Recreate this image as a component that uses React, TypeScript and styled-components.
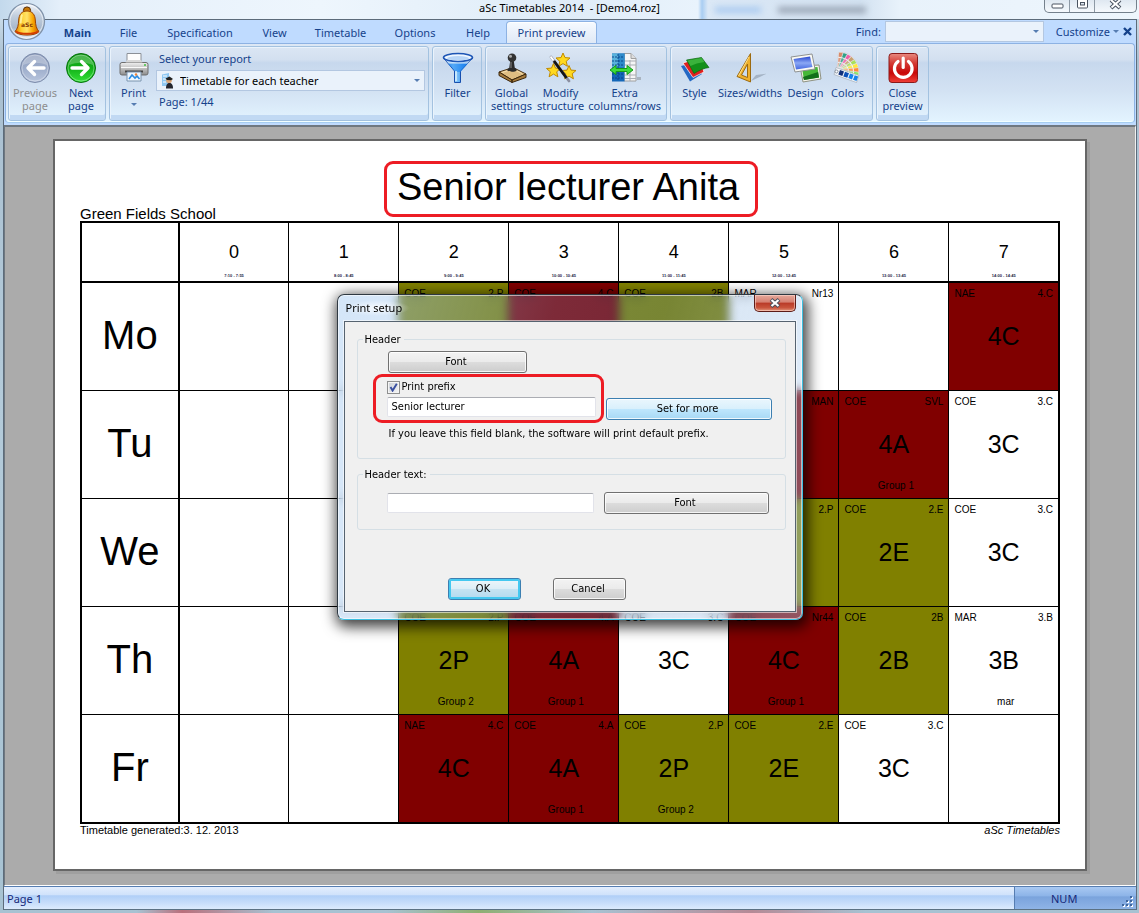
import React from "react";
import styled, { createGlobalStyle, css } from "styled-components";

const uiFont = `"Noto Sans", "Open Sans", sans-serif`;
const dialogFont = `"DejaVu Sans Condensed", "DejaVu Sans", sans-serif`;
const printFont = `"Liberation Sans", Arial, sans-serif`;
const navy = "#15428b";
const markRed = "#ed1c24";

const GlobalStyle = createGlobalStyle`
  *, *::before, *::after { box-sizing: border-box; }
  body { margin: 0; font-family: ${uiFont}; font-size: 11px; line-height: 13px; color: #000; }
  button, input, select { font: inherit; color: inherit; margin: 0; }
  svg { display: block; flex: none; }
`;

/* ---------- window ---------- */

const Desktop = styled.div`
  position: relative;
  min-height: 100vh;
  display: flex;
  flex-direction: column;
  padding: 0 2px 3px 3px;
  background:
    linear-gradient(90deg, transparent 12%, #b9707c 16%, transparent 24%, transparent 34%, #8fae72 42%, transparent 52%, #b58a96 66%, transparent 76%) bottom / 100% 3px no-repeat,
    linear-gradient(180deg, #d7e6f3 0, #a9bfd0 60px, #b4cbda 400px, #a7c2d2 100%);
`;

const TitleBar = styled.header`
  position: relative;
  height: 19px;
  margin: 0 -2px 0 -3px;
  display: flex;
  justify-content: center;
  background: linear-gradient(90deg, #c3d9ec 0, #e4effa 60px, #eef6fd 320px, #dfecf8 560px, #e9f3fc 698px, #a9cdf2 702px, #dbe8f6 708px, #d3e2f1 860px, #e8f2fb 900px, #eef6fd 100%);
`;

const WindowTitle = styled.h1`
  margin: 0;
  padding-top: 1px;
  font-size: 11px;
  font-weight: 400;
  line-height: 14px;
  white-space: pre;
`;

const GhostText = styled.span<{ $x: number; $w: number; $c: string }>`
  position: absolute;
  top: 7px;
  left: ${(p) => p.$x}px;
  width: ${(p) => p.$w}px;
  height: 6px;
  background: ${(p) => p.$c};
  filter: blur(3px);
`;

const WindowControls = styled.div`
  position: absolute;
  top: 0;
  right: 2px;
  height: 13px;
  display: flex;
  border: 1px solid #74808c;
  border-top: 0;
  border-radius: 0 0 5px 5px;
  overflow: hidden;
  background: linear-gradient(#dfe8f1, #f5f9fd);
`;

const WindowButton = styled.button<{ $w: number }>`
  width: ${(p) => p.$w}px;
  padding: 0;
  border: 0;
  border-right: 1px solid #8d99a5;
  background: transparent;
  display: flex;
  justify-content: center;
  align-items: flex-start;
  &:last-child { border-right: 0; }
`;

const Frame = styled.div`
  flex: 1;
  display: flex;
  flex-direction: column;
  border: 1px solid #5c6b7a;
  border-bottom-color: #5b7183;
  background: #bfdbff;
`;

const Orb = styled.button`
  position: absolute;
  left: 7px;
  top: 2px;
  width: 39px;
  height: 39px;
  padding: 0;
  border: 0;
  background: transparent;
`;

/* ---------- ribbon ---------- */

const TabBar = styled.nav`
  height: 23px;
  padding: 0 4px 0 46px;
  display: flex;
  align-items: flex-end;
  color: ${navy};
`;

const Tab = styled.button<{ $active?: boolean; $bold?: boolean; $w: number }>`
  width: ${(p) => p.$w}px;
  height: 22px;
  padding: 0;
  border: 1px solid transparent;
  border-bottom: 0;
  border-radius: 4px 4px 0 0;
  background: transparent;
  font-weight: ${(p) => (p.$bold ? 700 : 400)};
  white-space: nowrap;
  ${(p) =>
    p.$active &&
    css`
      position: relative;
      border-color: #8db2e3;
      background: linear-gradient(#f6faff, #dfe9f6);
      box-shadow: inset 0 1px 0 #fff;
    `}
`;

const FindArea = styled.div`
  margin-left: auto;
  align-self: stretch;
  display: flex;
  align-items: center;
  gap: 4px;
`;

const SelectBox = styled.div`
  height: 21px;
  display: flex;
  align-items: center;
  padding-right: 4px;
  border: 1px solid #b3c7e1;
  background: #eaf2fb;
  color: #000;
  select {
    flex: 1;
    min-width: 0;
    height: 19px;
    padding: 0 0 0 4px;
    border: 0;
    outline: 0;
    background: transparent;
    appearance: none;
  }
`;

const FindBox = styled(SelectBox)`
  width: 159px;
`;

const LinkButton = styled.button`
  margin-left: 8px;
  padding: 0;
  border: 0;
  background: transparent;
  display: flex;
  align-items: center;
  gap: 3px;
`;

const CloseTab = styled(LinkButton)`
  margin-left: 0;
`;

const Caret = styled.i`
  width: 0;
  height: 0;
  border: 3px solid transparent;
  border-top-color: #567db1;
  border-bottom: 0;
`;

const RibbonPanel = styled.div`
  height: 80px;
  margin: 0 1px;
  padding: 2px;
  display: flex;
  gap: 3px;
  border: 1px solid #8db2e3;
  border-bottom-color: #a6cdf0;
  border-radius: 4px;
  box-shadow: inset 0 -1px 0 #f2ffff;
  background: linear-gradient(#dde8f5 0, #d3e0f0 20%, #c7d8ed 24%, #d3e2f3 60%, #e3f4ff 100%);
`;

const Group = styled.div<{ $w: number }>`
  flex: 0 1 ${(p) => p.$w}px;
  display: flex;
  height: 75px;
  border: 1px solid #a3c2e0;
  border-radius: 3px;
  box-shadow: inset 1px 1px 0 #eaf3fc, inset 0 -5px 0 #c1d9f3;
  color: ${navy};
`;

const ToolButton = styled.button<{ $w: number }>`
  flex: 0 0 ${(p) => p.$w}px;
  padding: 5px 0 0 1px;
  border: 0;
  background: transparent;
  display: flex;
  flex-direction: column;
  align-items: center;
  justify-content: flex-start;
  text-align: center;
  white-space: pre;
  line-height: 13px;
  &:disabled { color: #8d8d8d; }
  svg { margin-bottom: 2px; }
  i { margin-top: 4px; }
`;

const ReportPicker = styled.div`
  flex: 1;
  display: flex;
  flex-direction: column;
  padding: 4px 3px 0 0;
  line-height: 16px;
  label, span { padding-left: 3px; }
  > div { margin: 3px 0; padding-left: 3px; }
`;

/* ---------- workspace and printed page ---------- */

const Workspace = styled.main`
  flex: 1;
  margin-top: 2px;
  padding: 12px 48px 14px 48px;
  border: 2px solid #6f7880;
  border-width: 2px 1px 1px 1px;
  border-bottom-color: #fff;
  border-right-color: #f0f0f0;
  background: #ababab;
`;

const Paper = styled.article`
  padding: 20px 25px 33px;
  border: 2px solid #666;
  background: #fff;
  box-shadow: 3px 3px 0 #9f9f9f;
  font-family: ${printFont};
`;

const PaperHeader = styled.div`
  display: grid;
  grid-template-columns: 1fr auto 1fr;
  align-items: end;
  font-size: 15px;
  line-height: 15px;
`;

const PaperTitle = styled.h2`
  height: 56px;
  margin: 0 0 4px 2px;
  padding: 0 16px 4px 10px;
  display: flex;
  align-items: center;
  border: 3px solid ${markRed};
  border-radius: 9px;
  font-size: 38px;
  font-weight: 400;
  line-height: 44px;
  white-space: nowrap;
`;

const PaperFooter = styled.div`
  display: flex;
  justify-content: space-between;
  font-size: 11px;
  line-height: 12px;
`;

const Grid = styled.table`
  width: 100%;
  border-collapse: collapse;
  table-layout: fixed;
  border: 2px solid #000;
`;

const HeadCell = styled.th`
  height: 60px;
  padding: 0;
  border: 1px solid #000;
  border-bottom-width: 2px;
  font-size: 18px;
  font-weight: 400;
  line-height: 20px;
  vertical-align: bottom;
  &:first-child { width: 10%; border-right-width: 2px; }
  small {
    display: block;
    padding: 12px 0 3px;
    color: #224;
    font-size: 4px;
    font-weight: 700;
    line-height: 4px;
  }
`;

const DayCell = styled.th`
  height: 108px;
  padding: 0 0 2px;
  border: 1px solid #000;
  border-right-width: 2px;
  font-size: 40px;
  font-weight: 400;
`;

const tones = { w: "#fff", o: "#808000", m: "#800000" };
type Tone = keyof typeof tones;

const LessonCell = styled.td<{ $tone: Tone }>`
  height: 108px;
  padding: 0;
  border: 1px solid #000;
  background: ${(p) => tones[p.$tone]};
  font-size: 10px;
  line-height: 12px;
`;

const Lesson = styled.div`
  height: 107px;
  padding: 5px 5px 6px;
  display: flex;
  flex-direction: column;
  justify-content: space-between;
  text-align: center;
  > div { display: flex; justify-content: space-between; min-height: 12px; }
  > strong { font-size: 25px; font-weight: 400; line-height: 30px; }
  > span { min-height: 12px; padding-left: 4px; }
`;

/* ---------- status bar ---------- */

const StatusBar = styled.footer`
  height: 23px;
  display: flex;
  border-top: 1px solid #567db1;
  background: linear-gradient(#e3eefd 0, #d0e2fb 35%, #b0cff7 40%, #c9defa 75%, #dcebfd 100%);
  color: #15287a;
  line-height: 21px;
`;

const StatusText = styled.span`
  flex: 1;
  padding: 1px 0 0 3px;
`;

const StatusMode = styled.span`
  width: 122px;
  padding: 1px 0 0 36px;
  display: flex;
  justify-content: space-between;
  align-items: flex-end;
  border-left: 1px solid #567db1;
  background: linear-gradient(#a9c9f2 0, #8db4e8 40%, #7aa3dc 45%, #8fb4e6 100%);
`;

/* ---------- dialog ---------- */

const DialogLayer = styled.div`
  position: fixed;
  inset: 0;
  display: grid;
  place-items: center;
`;

const Dialog = styled.section`
  position: relative;
  width: 466px;
  padding: 0 6px 7px 6px;
  border: 1px solid #2f3942;
  border-right-color: #3dbfe0;
  border-bottom-color: #3dbfe0;
  border-radius: 7px;
  background: linear-gradient(105deg, rgba(170, 205, 242, 0.5), rgba(116, 168, 224, 0.25) 40%, rgba(96, 148, 204, 0.25) 60%, rgba(180, 212, 246, 0.4));
  backdrop-filter: blur(5px);
  box-shadow: inset 0 0 0 1px rgba(255, 255, 255, 0.55), 2px 4px 14px 3px rgba(0, 0, 0, 0.75);
  font-family: ${dialogFont};
  line-height: 14px;
`;

const DialogBar = styled.div`
  height: 26px;
  display: flex;
  justify-content: space-between;
  align-items: flex-start;
`;

const DialogTitle = styled.h3`
  margin: 5px 0 0;
  padding: 0 8px 0 2px;
  font-family: ${uiFont};
  font-size: 11px;
  font-weight: 400;
  line-height: 16px;
  background: radial-gradient(closest-side, rgba(255, 255, 255, 0.8), rgba(255, 255, 255, 0));
`;

const DialogClose = styled.button`
  width: 42px;
  height: 17px;
  padding: 0;
  display: flex;
  align-items: center;
  justify-content: center;
  border: 1px solid #5c1c18;
  border-top: 0;
  border-radius: 0 0 5px 5px;
  background: linear-gradient(#e6a99c 0, #d57f70 45%, #b93a27 50%, #c9553d 80%, #e39a80 100%);
  box-shadow: inset 0 0 0 1px rgba(255, 220, 210, 0.55);
`;

const DialogBody = styled.div`
  padding: 11px 9px 11px 12px;
  border: 1px solid #566370;
  box-shadow: 0 0 0 1px rgba(255, 255, 255, 0.55);
  background: #f0f0f0;
`;

const FieldGroup = styled.fieldset<{ $top: number; $bottom: number }>`
  min-width: 0;
  margin: 0 0 9px;
  padding: ${(p) => p.$top}px 12px ${(p) => p.$bottom}px 15px;
  border: 1px solid #d5dfe5;
  border-radius: 3px;
  legend { margin-left: -10px; padding: 0 3px 0 2px; }
  p { margin: 4px 0 0 16px; white-space: nowrap; }
`;

const Row = styled.div<{ $gap?: number; $indent?: number; $top?: number }>`
  display: flex;
  align-items: flex-start;
  gap: ${(p) => p.$gap ?? 0}px;
  margin: ${(p) => p.$top ?? 0}px 0 0 ${(p) => p.$indent ?? 0}px;
`;

const PushButton = styled.button<{ $w: number; $kind?: "hot" | "default" }>`
  width: ${(p) => p.$w}px;
  height: 22px;
  padding: 0 2px 0 0;
  border: 1px solid #707070;
  border-radius: 3px;
  background: linear-gradient(#f3f3f3 0, #ebebeb 48%, #dcdcdc 52%, #cdcdcd 100%);
  box-shadow: inset 0 0 0 1px rgba(255, 255, 255, 0.8);
  ${(p) =>
    p.$kind === "hot" &&
    css`
      align-self: flex-end;
      margin-bottom: 3px;
      border-color: #3c7fb1;
      background: linear-gradient(#eaf6fd 0, #d9f0fc 48%, #bee6fd 52%, #a7d9f5 100%);
    `}
  ${(p) =>
    p.$kind === "default" &&
    css`
      border-color: #3c7fb1;
      background: linear-gradient(#eef6fa 0, #dceef7 48%, #c5e3f2 52%, #b3d9ee 100%);
      box-shadow: inset 0 0 0 2px #45c8f0;
    `}
`;

const Marked = styled.div`
  width: 231px;
  height: 49px;
  padding: 4px 5px 3px 11px;
  display: flex;
  flex-direction: column;
  gap: 3px;
  border: 3px solid ${markRed};
  border-radius: 9px;
`;

const CheckLabel = styled.label`
  height: 13px;
  display: flex;
  align-items: center;
  gap: 2px;
  input {
    appearance: none;
    width: 13px;
    height: 13px;
    border: 1px solid #8e8f8f;
    background:
      url("data:image/svg+xml,%3Csvg xmlns='http://www.w3.org/2000/svg' viewBox='0 0 11 11'%3E%3Cpath d='M2.5 5 4.6 8.6 8.8 1.8' fill='none' stroke='%233a50a0' stroke-width='1.9'/%3E%3C/svg%3E"),
      linear-gradient(135deg, #cbd0d6, #f6f6f6);
    box-shadow: inset 0 0 0 1px #f4f4f4;
  }
`;

const TextBox = styled.input`
  width: 100%;
  height: 20px;
  padding: 0 4px;
  border: 1px solid #e2e3ea;
  border-top-color: #abadb3;
  border-radius: 2px;
  background: #fff;
  outline: 0;
`;

const HeaderTextBox = styled(TextBox)`
  width: 207px;
  margin-top: 1px;
`;

/* ---------- icons ---------- */

const Icon = ({ children, w = 32 }: { children: React.ReactNode; w?: number }) => (
  <svg width={w} height="32" viewBox={`0 0 ${w} 32`} aria-hidden="true">{children}</svg>
);

const Stops = ({ id, c, h }: { id: string; c: string[]; h?: boolean }) => (
  <linearGradient id={id} x1="0" y1="0" x2={h ? "1" : "0"} y2={h ? "0" : "1"}>
    {c.map((v, i) => (
      <stop key={i} offset={i / (c.length - 1)} stopColor={v} />
    ))}
  </linearGradient>
);

const BellIcon = () => (
  <svg width="39" height="39" viewBox="0 0 39 39" aria-hidden="true">
    <defs>
      <Stops id="orb" c={["#f2f5f9", "#c3cfde", "#a9b9cd", "#e6eef8"]} />
      <Stops id="bell" h c={["#d96f00", "#ffcf2e", "#ffe36a", "#f9a500", "#c85a00"]} />
    </defs>
    <circle cx="19.500" cy="19.500" r="18" fill="url(#orb)" stroke="#7f91a8" strokeWidth="1.200" />
    <circle cx="19.500" cy="19.500" r="16.500" fill="none" stroke="#fff" opacity=".6" />
    <circle cx="20" cy="8.500" r="3.600" fill="#c87908" stroke="#5a2c00" />
    <path d="M20 9c-5.500 0-8 3.800-8.300 9-.3 5.500-1 8.500-3.700 11.500 3 4.800 21 4.800 24 0-2.700-3-3.400-6-3.700-11.500C28 12.800 25.500 9 20 9z" fill="url(#bell)" stroke="#9a4300" />
    <path d="M9 29.500c4 3 18 3 22 0" fill="none" stroke="#d43c00" strokeWidth="2" />
    <path d="M15 12.500c-1 3-1 6-1.500 9" fill="none" stroke="#fff6b0" strokeWidth="2" opacity=".8" />
    <text x="20" y="25" textAnchor="middle" fontFamily="DejaVu Sans" fontWeight="700" fontSize="6" fill="#8a3a00">aSc</text>
  </svg>
);

const ArrowIcon = ({ next }: { next?: boolean }) => (
  <Icon>
    <defs>
      <Stops id={next ? "gn" : "gp"} c={next ? ["#0d9a12", "#12b018", "#35e23a"] : ["#8f9ebd", "#9dadcb", "#b9c6de"]} />
    </defs>
    <circle cx="16" cy="16" r="14.500" fill={next ? "url(#gn)" : "url(#gp)"} stroke={next ? "#07700d" : "#7d8cab"} />
    <circle cx="16" cy="16" r="13" fill="none" stroke="#fff" opacity=".35" />
    <path d="M4 13c1-7 7-10 12-10s11 3 12 10c-8-3-16-3-24 0z" fill="#fff" opacity=".25" />
    <path
      d={next ? "M7 16h15M16.500 9.500 23 16l-6.500 6.500" : "M25 16H10M15.500 9.500 9 16l6.500 6.500"}
      fill="none" stroke="#fff" strokeWidth="3.400" strokeLinecap="round" strokeLinejoin="round"
    />
  </Icon>
);

const PrinterIcon = () => (
  <Icon>
    <defs><Stops id="prn" c={["#f0f0f0", "#bdbdbd", "#8c8c8c"]} /></defs>
    <path d="M9 1.500h14V13H9z" fill="#fdfdfd" stroke="#8b9097" />
    <rect x="2" y="10.500" width="28" height="12.500" rx="2" fill="url(#prn)" stroke="#6e6e6e" />
    <path d="M7.500 10.500 9 8h14l1.500 2.500z" fill="#d8d8d8" />
    <path d="M3 15.500h26" stroke="#fafafa" />
    <path d="M7 19.500h18" stroke="#444" strokeWidth="2" />
    <circle cx="27" cy="13" r="1" fill="#41c341" />
    <path d="M9 20h14v9H9z" fill="#eef7ff" stroke="#7b93ad" />
    <path d="m11 27 3-4 3 3 2-2 2.500 3" fill="none" stroke="#2b8be0" strokeWidth="1.600" />
    <circle cx="18" cy="22.500" r="1.200" fill="#f08030" />
  </Icon>
);

const ReportIcon = () => (
  <svg width="16" height="16" viewBox="0 0 16 16" aria-hidden="true">
    <path d="M2 1.500 9 0v13H2z" fill="#8fc8f2" />
    <path d="M3 3h4M3 6h3M3 9h3" stroke="#fff" />
    <circle cx="9" cy="7.500" r="2.800" fill="#d9a679" />
    <path d="M5.500 5.500 9.500 3.500 13 6l-2 1.200-4-.2z" fill="#222" />
    <path d="M6 15.500c0-4 1.500-5.500 3.500-5.500s3.500 1.500 3.500 5.500z" fill="#24262e" />
  </svg>
);

const FunnelIcon = () => (
  <Icon>
    <defs><Stops id="fun" h c={["#2b78dd", "#a9defc", "#3d97f2", "#0f56b8"]} /></defs>
    <path d="M1.500 6 12.500 19v11.500h6V19L30.500 6z" fill="url(#fun)" stroke="#174fae" strokeLinejoin="round" />
    <path d="M3 7.500 7 12h18l4-4.500z" fill="#d4e8fb" opacity=".75" />
    <path d="M6 11.500h20L18.500 20h-5z" fill="#1b83f1" opacity=".6" />
    <ellipse cx="16" cy="5.500" rx="14.500" ry="4" fill="#eef6ff" stroke="#1d55b5" strokeWidth="1.600" />
    <ellipse cx="16" cy="6.200" rx="11" ry="2.200" fill="#b9d6f7" />
    <path d="M14 19v10" stroke="#d7f0ff" strokeWidth="1.500" />
  </Icon>
);

const StampIcon = () => (
  <Icon>
    <path d="M3 20 17 15.500 30 22 16 28z" fill="#e0be82" stroke="#4a3214" />
    <path d="M3 20v3.500L16 30.500V28zM30 22v3.500L16 30.500V28z" fill="#a67c3d" stroke="#3b260c" />
    <path d="M6 20.500 17 17l9 4.500" fill="none" stroke="#f6e0b0" />
    <path d="M14.200 9h3.600l1 7c1.500.6 2 1.300 2 2.200-1.500 2-8.100 2-9.600 0 0-.9.500-1.600 2-2.200z" fill="#2b2b2b" />
    <circle cx="16" cy="5.800" r="4.300" fill="#333" />
    <circle cx="14.500" cy="4.200" r="1.500" fill="#aaa" />
    <path d="M15 10v6" stroke="#888" />
  </Icon>
);

const starPath = "m0-7 2 4.600 5 .4-3.800 3.300L4.400 6.300 0 3.600-4.400 6.300-3.200 1.300-7-2l5-.4z";
const WandIcon = () => (
  <Icon>
    {[[18, 8], [8.5, 18.5], [24, 20.5]].map(([x, y]) => (
      <path key={x} d={starPath} transform={`translate(${x} ${y})`} fill="#ffd91f" stroke="#c08a00" strokeLinejoin="round" />
    ))}
    <path d="m6 5 18 24" stroke="#8b8fa0" strokeWidth="2.800" strokeLinecap="round" />
    <path d="m9 9 12.500 17" stroke="#141414" strokeWidth="2.800" />
    <path d="m5.500 4.500 3 4" stroke="#fff" strokeWidth="2" />
  </Icon>
);

const ColumnsIcon = () => (
  <Icon>
    <path d="M15 1.500h7l5 5V29H15z" fill="#f5f5f5" stroke="#a0a0a0" />
    <path d="M22 1.500v5h5" fill="#ddd" stroke="#a0a0a0" />
    <path d="M15 9h12M15 13h12M15 23h12M15 26.500h12M21 8v21" stroke="#a9adb3" />
    <path d="M28 25h4v3h-4z" fill="#aab4c0" />
    <rect x="3" y="1.500" width="12.500" height="28" fill="#1467b8" />
    <rect x="3" y="1.500" width="6" height="14" fill="#58b2dc" />
    <rect x="9" y="1.500" width="6.500" height="14" fill="#2f8bcb" />
    <path d="M3 5h12M3 9h12M3 13h12M3 22h12M3 26h12M9 2v27" stroke="#083f86" strokeWidth=".9" strokeDasharray="2 1" />
    <path d="m1 18 6-4.500V16.500h11v-3l6 4.500-6 4.500v-3H7v3z" fill="#3ddc3d" stroke="#149a18" />
  </Icon>
);

const StyleIcon = () => (
  <Icon>
    <path d="m2 14 16-4 5 12-12 7.500z" fill="#2468c4" />
    <path d="m4 11 16-5 5 14-11 5.500z" fill="#e02020" stroke="#fff" strokeWidth=".7" />
    <path d="m7.500 8 15-2.500L30 15.500c-5 .5-10 3-15 6z" fill="#12901a" stroke="#0a6a10" strokeWidth=".7" />
    <path d="m8.500 8.500 14-2.500 3 4c-6 .8-10 2-14 4z" fill="#4cc04c" opacity=".7" />
  </Icon>
);

const TriangleIcon = () => (
  <Icon>
    <path d="M17 29 33 21.500 22 23z" fill="#8a97a8" opacity=".6" />
    <path fillRule="evenodd" d="M16.500 1.500V30L3 24.500zM13.500 12v13.500L7.500 23z" fill="#efb02c" stroke="#9c6a10" strokeLinejoin="round" />
    <path d="M15 5 4.500 24" stroke="#ffe08a" />
  </Icon>
);

const DesignIcon = () => (
  <Icon>
    <defs><Stops id="blu" c={["#2848d0", "#8ba8f4", "#4468e0"]} /></defs>
    <path d="m10 14 19-1 2 14-18 3z" fill="#f4f4ea" stroke="#8f9282" />
    <path d="m12 16 15.500-1L29 25.500 14 28z" fill="#46b838" />
    <path d="m13 25 15-5 1 5.500L14 28z" fill="#13701a" />
    <path d="m1 5 21-3 3 15L5 20z" fill="#fafaf5" stroke="#8f9292" />
    <path d="m3.500 7 16.500-2.500L22.500 15 6 17.500z" fill="url(#blu)" />
  </Icon>
);

const swatches = ["#d88a6a", "#30a088", "#ef5fa8", "#c8a070", "#a8e05a", "#ffe93a", "#ff8a3a", "#8be868"];
const ColorsIcon = () => (
  <Icon>
    {swatches.map((c, i) => (
      <g key={c} transform={`rotate(${-84 + i * 13} 7 20)`}>
        <rect x="10" y="17.500" width="17" height="5" fill="#f7f7f7" stroke="#c3c8d0" strokeWidth=".4" />
        <rect x="12" y="18" width="4" height="4" fill={c} opacity=".65" />
        <rect x="17" y="18" width="4" height="4" fill={c} opacity=".85" />
        <rect x="22" y="18" width="4.500" height="4" fill={c} />
      </g>
    ))}
    <path d="m4 15.500 23 8-2.500 7L2 22.500z" fill="#f5f8fc" stroke="#a5adb8" strokeWidth=".7" />
    <path d="m8 18 4 1.400-1.700 4.600-4-1.400z" fill="#10307a" />
    <path d="m13 19.800 4 1.400-1.700 4.600-4-1.400z" fill="#0b50b8" />
    <path d="m18 21.500 3.700 1.300-1.700 4.600-3.700-1.300zM22.700 23.200l3.500 1.200-1.700 4.600-3.500-1.200z" fill="#1684ea" />
    <circle cx="4.500" cy="19.500" r="1.500" fill="#fff" stroke="#8892a0" />
  </Icon>
);

const PowerIcon = () => (
  <Icon>
    <defs><Stops id="pow" c={["#e88a80", "#d43a34", "#c80808", "#f04038"]} /></defs>
    <rect x="2" y="1.500" width="28.500" height="29" rx="3" fill="url(#pow)" stroke="#8a1a1a" />
    <path d="M11 9.500a8.800 8.800 0 1 0 10.500 0" fill="none" stroke="#fff" strokeWidth="3.200" strokeLinecap="round" />
    <path d="M16.200 6v9.500" stroke="#fff" strokeWidth="3.200" strokeLinecap="round" />
  </Icon>
);

/* ---------- data ---------- */

const tabs: [string, number, string?][] = [
  ["Main", 55, "bold"], ["File", 47], ["Specification", 96], ["View", 53], ["Timetable", 79],
  ["Options", 70], ["Help", 56], ["Print preview", 91, "active"],
];

const times = ["7:10 - 7:55", "8:00 - 8:45", "9:00 - 9:45", "10:00 - 10:45", "11:00 - 11:45", "12:00 - 12:45", "13:00 - 13:45", "14:00 - 14:45"];

type Slot = [Tone, string, string, string?, string?] | null;
const week: [string, Slot[]][] = [
  ["Mo", [null, null, ["o", "COE", "2.P"], ["m", "COE", "4.C"], ["o", "COE", "2B"], ["w", "MAR", "Nr13"], null, ["m", "NAE", "4.C", "4C"]]],
  ["Tu", [null, null, null, null, null, ["m", "", "MAN"], ["m", "COE", "SVL", "4A", "Group 1"], ["w", "COE", "3.C", "3C"]]],
  ["We", [null, null, null, null, null, ["o", "", "2.P"], ["o", "COE", "2.E", "2E"], ["w", "COE", "3.C", "3C"]]],
  ["Th", [null, null, ["o", "COE", "2.P", "2P", "Group 2"], ["m", "COE", "4.A", "4A", "Group 1"], ["w", "COE", "3.C", "3C"], ["m", "COE", "Nr44", "4C", "Group 1"], ["o", "COE", "2B", "2B"], ["w", "MAR", "3.B", "3B", "mar"]]],
  ["Fr", [null, null, ["m", "NAE", "4.C", "4C"], ["m", "COE", "4.A", "4A", "Group 1"], ["o", "COE", "2.P", "2P", "Group 2"], ["o", "COE", "2.E", "2E"], ["w", "COE", "3.C", "3C"], null]],
];

/* ---------- sections ---------- */

const Ribbon = () => (
  <RibbonPanel>
    <Group $w={98}>
      <ToolButton $w={51} disabled><ArrowIcon />{"Previous\npage"}</ToolButton>
      <ToolButton $w={41}><ArrowIcon next />{"Next\npage"}</ToolButton>
    </Group>
    <Group $w={320}>
      <ToolButton $w={46}><PrinterIcon />Print<Caret /></ToolButton>
      <ReportPicker>
        <label htmlFor="report">Select your report</label>
        <SelectBox>
          <ReportIcon />
          <select id="report"><option>Timetable for each teacher</option></select>
          <Caret />
        </SelectBox>
        <span>Page: 1/44</span>
      </ReportPicker>
    </Group>
    <Group $w={50}>
      <ToolButton $w={48}><FunnelIcon />Filter</ToolButton>
    </Group>
    <Group $w={182}>
      <ToolButton $w={50}><StampIcon />{"Global\nsettings"}</ToolButton>
      <ToolButton $w={48}><WandIcon />{"Modify\nstructure"}</ToolButton>
      <ToolButton $w={80}><ColumnsIcon />{"Extra\ncolumns/rows"}</ToolButton>
    </Group>
    <Group $w={203}>
      <ToolButton $w={46}><StyleIcon />Style</ToolButton>
      <ToolButton $w={65}><TriangleIcon />Sizes/widths</ToolButton>
      <ToolButton $w={46}><DesignIcon />Design</ToolButton>
      <ToolButton $w={38}><ColorsIcon />Colors</ToolButton>
    </Group>
    <Group $w={53}>
      <ToolButton $w={50}><PowerIcon />{"Close\npreview"}</ToolButton>
    </Group>
  </RibbonPanel>
);

const Timetable = () => (
  <Grid>
    <thead>
      <tr>
        <HeadCell />
        {times.map((t, i) => (
          <HeadCell key={t} scope="col">{i}<small>{t}</small></HeadCell>
        ))}
      </tr>
    </thead>
    <tbody>
      {week.map(([day, slots]) => (
        <tr key={day}>
          <DayCell scope="row">{day}</DayCell>
          {slots.map((s, i) => (
            <LessonCell key={i} $tone={s ? s[0] : "w"}>
              {s && (
                <Lesson>
                  <div><span>{s[1]}</span><span>{s[2]}</span></div>
                  <strong>{s[3]}</strong>
                  <span>{s[4]}</span>
                </Lesson>
              )}
            </LessonCell>
          ))}
        </tr>
      ))}
    </tbody>
  </Grid>
);

const PrintSetup = () => (
  <DialogLayer>
    <Dialog role="dialog" aria-labelledby="setup-title">
      <DialogBar>
        <DialogTitle id="setup-title">Print setup</DialogTitle>
        <DialogClose aria-label="Close">
          <svg width="12" height="10" viewBox="0 0 12 10">
            <path d="m2 1.500 8 7M10 1.500l-8 7" stroke="#4a4f5c" strokeWidth="4" />
            <path d="m2.500 2 7 6M9.500 2l-7 6" stroke="#fff" strokeWidth="2.200" />
          </svg>
        </DialogClose>
      </DialogBar>
      <DialogBody>
        <FieldGroup $top={4} $bottom={17}>
          <legend>Header</legend>
          <Row $indent={15}><PushButton $w={139}>Font</PushButton></Row>
          <Row $gap={2} $top={1}>
            <Marked>
              <CheckLabel><input type="checkbox" defaultChecked />Print prefix</CheckLabel>
              <TextBox aria-label="Prefix" defaultValue="Senior lecturer" />
            </Marked>
            <PushButton $w={166} $kind="hot">Set for more</PushButton>
          </Row>
          <p>If you leave this field blank, the software will print default prefix.</p>
        </FieldGroup>
        <FieldGroup $top={10} $bottom={15}>
          <legend>Header text:</legend>
          <Row $indent={14} $gap={10}>
            <HeaderTextBox aria-label="Header text" />
            <PushButton $w={165}>Font</PushButton>
          </Row>
        </FieldGroup>
        <Row $indent={91} $gap={32} $top={48}>
          <PushButton $w={73} $kind="default">OK</PushButton>
          <PushButton $w={73}>Cancel</PushButton>
        </Row>
      </DialogBody>
    </Dialog>
  </DialogLayer>
);

export default function App() {
  return (
    <Desktop>
      <GlobalStyle />
      <TitleBar>
        <GhostText $x={715} $w={46} $c="#a9caf0" />
        <GhostText $x={778} $w={88} $c="#97a3b2" />
        <WindowTitle>{"aSc Timetables 2014  - [Demo4.roz]"}</WindowTitle>
        <WindowControls>
          <WindowButton $w={25} aria-label="Minimize">
            <svg width="13" height="11"><rect x="1" y="4" width="11" height="4" rx="1" fill="#fff" stroke="#4a5360" /></svg>
          </WindowButton>
          <WindowButton $w={25} aria-label="Maximize">
            <svg width="13" height="11"><rect x="1.500" y="-2" width="10" height="10" rx="1" fill="#fff" stroke="#4a5360" /><rect x="4.500" y="2.500" width="4" height="2.500" fill="#dfe8f1" stroke="#4a5360" /></svg>
          </WindowButton>
          <WindowButton $w={41} aria-label="Close window">
            <svg width="13" height="11"><path d="m2 0 9 8M11 0 2 8" stroke="#4a5360" strokeWidth="4" /><path d="m2 0 8.500 7.500M11 0 2.500 7.500" stroke="#fff" strokeWidth="2" /></svg>
          </WindowButton>
        </WindowControls>
      </TitleBar>
      <Frame>
        <TabBar>
          {tabs.map(([name, w, kind]) => (
            <Tab key={name} $w={w} $bold={kind === "bold"} $active={kind === "active"}>{name}</Tab>
          ))}
          <FindArea>
            <label htmlFor="find">Find:</label>
            <FindBox><select id="find" /><Caret /></FindBox>
            <LinkButton>Customize<Caret /></LinkButton>
            <CloseTab aria-label="Close preview tab">
              <svg width="9" height="9" viewBox="0 0 9 9"><path d="m1 1 7 7M8 1 1 8" stroke={navy} strokeWidth="2.400" /></svg>
            </CloseTab>
          </FindArea>
        </TabBar>
        <Ribbon />
        <Workspace>
          <Paper>
            <PaperHeader>
              <span>Green Fields School</span>
              <PaperTitle>Senior lecturer Anita</PaperTitle>
            </PaperHeader>
            <Timetable />
            <PaperFooter>
              <span>Timetable generated:3. 12. 2013</span>
              <em>aSc Timetables</em>
            </PaperFooter>
          </Paper>
        </Workspace>
        <StatusBar>
          <StatusText>Page 1</StatusText>
          <StatusMode>
            NUM
            <svg width="14" height="14" viewBox="0 0 14 14" aria-hidden="true">
              {[[8, 1], [4, 5], [8, 5], [0, 9], [4, 9], [8, 9]].map(([x, y]) => (
                <g key={`${x}-${y}`}>
                  <rect x={x + 1} y={y + 1} width="2" height="2" fill="#fff" />
                  <rect x={x} y={y} width="2" height="2" fill="#3f669c" />
                </g>
              ))}
            </svg>
          </StatusMode>
        </StatusBar>
      </Frame>
      <Orb aria-label="Application menu"><BellIcon /></Orb>
      <PrintSetup />
    </Desktop>
  );
}
